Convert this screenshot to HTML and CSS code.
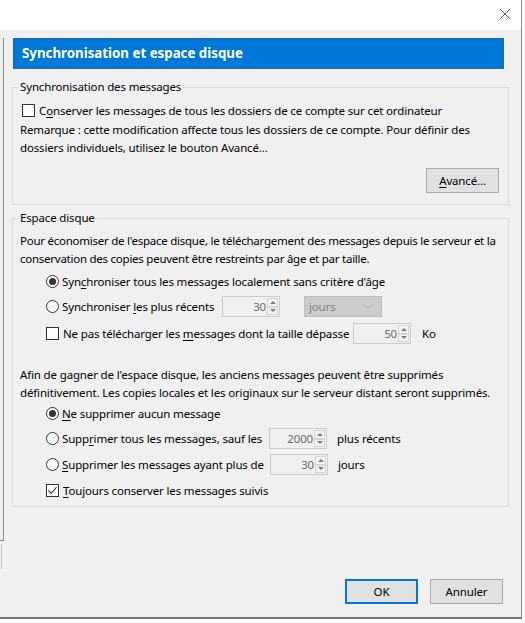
FILE: index.html
```html
<!DOCTYPE html>
<html lang="fr">
<head>
<meta charset="utf-8">
<link rel="stylesheet" href="styles.css">
</head>
<body>
<div class="screen">
  <div class="window">
    <div class="titlebar">
      <svg class="close" width="12" height="12" viewBox="0 0 12 12"><path d="M1 1 L11 11 M11 1 L1 11" stroke="#5a5a5a" stroke-width="1" fill="none"/></svg>
    </div>
    <div class="body">
      <div class="leftedge"><div class="edge-a"></div><div class="edge-b"></div></div>
      <div class="main">
        <div class="header">Synchronisation et espace disque</div>

        <fieldset class="group g1">
          <legend>Synchronisation des messages</legend>
          <div class="row r-cb1"><span class="cb"></span><span>C<u>o</u>nserver les messages de tous les dossiers de ce compte sur cet ordinateur</span></div>
          <p class="para p1">Remarque : cette modification affecte tous les dossiers de ce compte. Pour définir des dossiers individuels, utilisez le bouton Avancé...</p>
          <div class="btnrow"><button class="btn"><u>A</u>vancé...</button></div>
        </fieldset>

        <fieldset class="group g2">
          <legend>Espace disque</legend>
          <p class="para p2">Pour économiser de l'espace disque, le téléchargement des messages depuis le serveur et la conservation des copies peuvent être restreints par âge et par taille.</p>
          <div class="row opt r-a"><span class="rb on"></span><span>Syn<u>c</u>hroniser tous les messages localement sans critère d'âge</span></div>
          <div class="row opt r-b"><span class="lbl w-b"><span class="rb"></span><span>Synchroniser <u>l</u>es plus récents</span></span>
            <span class="spin"><span class="num">30</span><span class="arrows"><span class="up"></span><span class="dn"></span></span></span>
            <span class="select">jours<svg class="chev" width="10" height="6" viewBox="0 0 10 6"><path d="M0.5 0.5 L5 5 L9.5 0.5" stroke="#b0b0b0" fill="none"/></svg></span>
          </div>
          <div class="row opt r-c"><span class="lbl w-c"><span class="cb"></span><span>Ne pas télécharger les <u>m</u>essages dont la taille dépasse</span></span>
            <span class="spin"><span class="num">50</span><span class="arrows"><span class="up"></span><span class="dn"></span></span></span>
            <span class="unit u-ko">Ko</span>
          </div>
          <p class="para p3">Afin de gagner de l'espace disque, les anciens messages peuvent être supprimés définitivement. Les copies locales et les originaux sur le serveur distant seront supprimés.</p>
          <div class="row opt r-d"><span class="rb on"></span><span><u>N</u>e supprimer aucun message</span></div>
          <div class="row opt r-e"><span class="lbl w-e"><span class="rb"></span><span>Supp<u>r</u>imer tous les messages, sauf les</span></span>
            <span class="spin"><span class="num">2000</span><span class="arrows"><span class="up"></span><span class="dn"></span></span></span>
            <span class="unit u-pr">plus récents</span>
          </div>
          <div class="row opt r-f"><span class="lbl w-f"><span class="rb"></span><span><u>S</u>upprimer les messages ayant plus de</span></span>
            <span class="spin"><span class="num">30</span><span class="arrows"><span class="up"></span><span class="dn"></span></span></span>
            <span class="unit u-j">jours</span>
          </div>
          <div class="row opt r-g"><span class="cb on"><svg width="11" height="11" viewBox="0 0 11 11"><path d="M1.5 5.5 L4.2 8.3 L9.6 2.2" stroke="#333" stroke-width="1.1" fill="none"/></svg></span><span><u>T</u>oujours conserver les messages suivis</span></div>
        </fieldset>

        <div class="actions">
          <button class="btn ok">OK</button>
          <button class="btn">Annuler</button>
        </div>
      </div>
    </div>
  </div>
  <div class="rightstrip"></div>
</div>
</body>
</html>
```

FILE: styles.css
```css
* { box-sizing: border-box; }
html, body { margin: 0; padding: 0; }
body {
  background: #ffffff;
  font-family: "Noto Sans", "Open Sans", sans-serif;
  font-size: 11.5px;
  letter-spacing: -0.15px;
  color: #000;
  width: 525px;
  height: 623px;
  overflow: hidden;
}
.screen { display: flex; height: 619px; }
.window {
  width: 522px;
  height: 619px;
  background: #f0f0f0;
  border-right: 1px solid #8a8a8a;
  border-bottom: 2px solid #7a7a7a;
  display: flex;
  flex-direction: column;
}
.rightstrip { flex: 1; background: #ffffff; }
.titlebar {
  height: 30px;
  flex: none;
  background: #ffffff;
  display: flex;
  justify-content: flex-end;
  align-items: flex-start;
  padding: 8px 10px 0 0;
}
.body { display: flex; flex: 1; }
.leftedge { width: 4px; display: flex; flex-direction: column; }
.edge-a { margin-top: 8px; height: 503px; border-right: 1px solid #8c8c8c; border-bottom: 1px solid #8c8c8c; }
.edge-b { margin-top: 3px; height: 25px; width: 2px; border-right: 1px solid #c4c4c4; }
.main { flex: 1; padding: 0 12px 0 8px; display: flex; flex-direction: column; }

.header {
  margin: 8px 5px 0 1px;
  height: 31px;
  flex: none;
  background: #0078d7;
  border: 1px solid #2c64a8;
  color: #fff;
  font-weight: bold;
  font-size: 13.3px;
  letter-spacing: 0;
  line-height: 29px;
  padding-left: 8px;
}

.group {
  margin: 0;
  border: 1px solid #dcdcdc;
  padding: 0 2px 0 7px;
  min-width: 0;
}
.group legend {
  padding: 0 2px;
  margin-left: -2px;
  line-height: 16px;
}
.g1 { margin-top: 10px; padding-bottom: 11px; }
.g2 { margin-top: 5px; padding-bottom: 7px; }

.row { display: flex; align-items: center; height: 18px; white-space: nowrap; }
.row u, .btn u { text-decoration: underline; text-underline-offset: 2px; }
.lbl { display: flex; align-items: center; }
.para { margin: 0; line-height: 18px; }

.cb {
  width: 13px; height: 13px;
  border: 1px solid #333;
  background: #fff;
  margin-right: 4px;
  flex: none;
  display: flex; align-items: center; justify-content: center;
}
.rb {
  width: 13px; height: 13px;
  border: 1px solid #333;
  border-radius: 50%;
  background: #fff;
  margin-right: 3px;
  flex: none;
  display: flex; align-items: center; justify-content: center;
}
.rb.on::after { content: ""; width: 7px; height: 7px; border-radius: 50%; background: #333; }

.r-cb1 { margin-top: 6px; padding-left: 2px; }
.p1 { margin-top: 2px; padding-right: 2px; }
.btnrow { display: flex; justify-content: flex-end; margin-top: 11px; padding-right: 7px; }
.btn {
  width: 73px; height: 25px;
  background: #e1e1e1;
  border: 1px solid #adadad;
  font-family: inherit;
  font-size: 11.5px;
  letter-spacing: inherit;
  color: #000;
  padding: 0;
}

.p2 { margin-top: 6px; letter-spacing: -0.25px; }
.opt { padding-left: 26px; }
.r-a { margin-top: 4px; }
.r-b, .r-c, .r-e, .r-f { height: 21px; }
.r-b { margin-top: 6px; }
.r-c { margin-top: 6px; }
.p3 { margin-top: 22px; padding-right: 2px; }
.r-d { margin-top: 2px; }
.r-e { margin-top: 6px; }
.r-f { margin-top: 5px; }
.r-g { margin-top: 6px; }

.w-b { width: 176px; }
.w-c { width: 307px; }
.w-e { width: 223px; }
.w-f { width: 224px; }

.spin {
  width: 58px; height: 21px;
  border: 1px solid #cccccc;
  display: flex;
  align-items: stretch;
  color: #6d6d6d;
  flex: none;
}
.num { flex: 1; text-align: right; line-height: 19px; padding-right: 1px; }
.arrows { width: 11px; display: flex; flex-direction: column; margin: 1px 1px 1px 0; }
.arrows span { flex: 1; border: 1px solid #d6d6d6; background: #f3f3f3; display: flex; align-items: center; justify-content: center; }
.arrows .up::after { content: ""; border-left: 3px solid transparent; border-right: 3px solid transparent; border-bottom: 3px solid #7a7a7a; }
.arrows .dn::after { content: ""; border-left: 3px solid transparent; border-right: 3px solid transparent; border-top: 3px solid #7a7a7a; }

.select {
  margin-left: 24px;
  width: 78px; height: 21px;
  background: #cccccc;
  border: 1px solid #bfbfbf;
  color: #838383;
  display: flex; align-items: center; justify-content: space-between;
  padding: 0 8px 0 4px;
  flex: none;
}
.unit { margin-left: 10px; }
.u-ko { margin-left: 11px; }

.actions { display: flex; justify-content: flex-end; gap: 12px; margin-top: auto; margin-bottom: 13px; margin-right: 6px; }
.btn.ok { border: 2px solid #0078d7; }
```
